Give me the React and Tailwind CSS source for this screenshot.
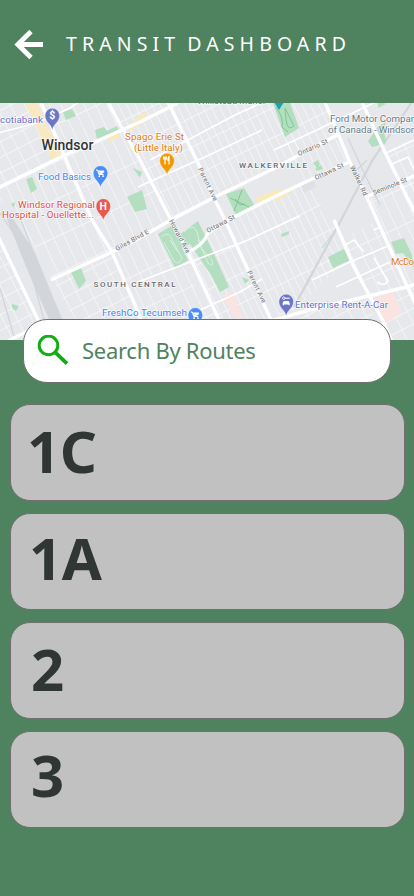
import React from "react";

const majorRoads = [
  "M40 100L64 155L92 220L112 252L135 305L142 322",
  "M-2 188L65 155L140 122L170 107L182 100",
  "M107 100L122 128L140 160L171 220L188 253L220 322",
  "M167 100L198 163L215 200L225 220L248 270L272 322",
  "M51 280L112 252L138 239L171 220L215 197L271 170L337 135",
  "M188 252Q203 246 208 233L228 220L274 197L314 178L349 162",
  "M324 100L349 160L366 195L377 220L407 286L418 310",
  "M366 197L416 175",
  "M270 321L317 308L407 287L416 284",
  "M334 220L354 267L384 323L392 342",
  "M361 100L384 150L407 197L416 214",
  "M-2 236L38 320L46 342",
  "M8 341L28 331",
];

const midRoads = [
  "M-2 133L37 123L70 108L82 100",
  "M138 187L205 157L262 130",
  "M150 160L237 114L275 97",
  "M138 282L190 262L248 240L300 216",
  "M200 310L240 292L262 279",
  "M274 150L338 120L380 100",
  "M312 280L350 262L388 246",
  "M336 287L390 262",
  "M345 245L354 240L364 252M374 230L382 226M374 258L388 281Q384 287 377 282",
  "M384 154L414 140M390 165L408 157L414 170",
];

const parks = [
  "M63 112L72 109L76 116L66 120Z",
  "M95 130L104 127L107 131L117 126L120 132L97 139Z",
  "M26 179L32 177L37 189L31 193Z",
  "M11 204L15 202L14 208Z",
  "M127 197L142 190L147 209L135 212Z",
  "M133 168L142 172L140 178Z",
  "M71 272L81 268L86 281L79 289Z",
  "M12 304L19 306L16 311L12 308Z",
  "M226 194L244 188L255 206L236 215Z",
  "M273 103L290 103L299 128L285 137Z",
  "M378 100L386 104L378 108Z",
  "M378 127L386 122L384 130L386 143L372 147L368 141Z",
  "M313 163L318 160L320 164L317 168Z",
  "M315 168L321 165L323 169L317 171Z",
  "M158 234L171 226L179 235L198 221L214 254L229 287L220 292L211 275L190 244L182 248L188 260L175 268Z",
  "M242 277L249 280L245 284Z",
  "M328 257L344 249L350 260L333 268Z",
  "M391 242L404 238L412 255L414 268L403 253L396 254Z",
  "M281 234L289 231L289 234L282 237Z",
];

const labels = [
  { x: 0, y: 123, w: 43, t: "cotiabank", c: "#6672cc" },
  { x: 38, y: 180, w: 53, t: "Food Basics", c: "#4285f4" },
  { x: 18, y: 208, w: 77, t: "Windsor Regional", c: "#e84c45" },
  { x: 2, y: 218, w: 92, t: "Hospital -  Ouellette...", c: "#e84c45" },
  { x: 125, y: 140, w: 59, t: "Spago Erie St", c: "#e37d0b" },
  { x: 134, y: 151, w: 49, t: "(Little Italy)", c: "#e37d0b" },
  { x: 330, y: 122, w: 84, t: "Ford Motor Compar", c: "#657d89" },
  { x: 328, y: 132.5, w: 86, t: "of Canada - Windsor", c: "#657d89" },
  { x: 391, y: 265, w: 23, t: "McDo", c: "#e37d0b" },
  { x: 295, y: 308, w: 93, t: "Enterprise Rent-A-Car", c: "#6672cc" },
  { x: 102, y: 316, w: 85, t: "FreshCo Tecumseh", c: "#4285f4" },
];

const streets = [
  { x: 117, y: 251, r: -29, w: 37, t: "Giles Blvd E" },
  { x: 169, y: 221, r: 62, w: 37, t: "Howard Ave" },
  { x: 208, y: 233, r: -28, w: 31, t: "Ottawa St" },
  { x: 198, y: 169, r: 64, w: 36, t: "Parent Ave" },
  { x: 247, y: 272, r: 64, w: 35, t: "Parent Ave" },
  { x: 299, y: 156, r: -24, w: 32, t: "Ontario St" },
  { x: 316, y: 180, r: -25, w: 31, t: "Ottawa St" },
  { x: 350, y: 167, r: 65, w: 32, t: "Walker Rd" },
  { x: 374, y: 195, r: -22, w: 36, t: "Seminole St" },
];

function Pin({ x, y, color, children }) {
  return (
    <g transform={`translate(${x} ${y})`}>
      <path
        d="M0 14.2C-1 8.8-7.2 6.5-7.2 0A7.2 7.2 0 0 1 7.2 0C7.2 6.5 1 8.8 0 14.2Z"
        fill={color}
        stroke="#fff"
        strokeOpacity=".5"
        strokeWidth=".5"
      />
      {children}
    </g>
  );
}

function Cart() {
  return (
    <g>
      <path d="M-4.5-3H-3L-1.5 1.5H3M-2.3-2H3.5L2.4 0H-1.6" fill="#fff" stroke="#fff" strokeWidth="1" />
      <circle cx="-1.2" cy="3.2" r=".9" fill="#fff" />
      <circle cx="2.6" cy="3.2" r=".9" fill="#fff" />
    </g>
  );
}

function CityMap() {
  return (
    <svg viewBox="0 103 414 237" className="block h-[237px] w-full font-[Roboto,sans-serif]">
      <defs>
        <pattern id="fine" width="7.5" height="27" patternUnits="userSpaceOnUse" patternTransform="rotate(-26)">
          <path d="M0 0V27M0 0H7.5" stroke="#fff" strokeOpacity=".75" strokeWidth="1.3" />
        </pattern>
        <pattern id="wide" width="13" height="14" patternUnits="userSpaceOnUse" patternTransform="rotate(-27)">
          <path d="M0 0V14M0 0H13" stroke="#fff" strokeOpacity=".75" strokeWidth="1.3" />
        </pattern>
        <pattern id="long" width="10.5" height="34" patternUnits="userSpaceOnUse" patternTransform="rotate(-25)">
          <path d="M0 0V34M0 0H10.5" stroke="#fff" strokeOpacity=".75" strokeWidth="1.3" />
        </pattern>
      </defs>

      <rect x="0" y="103" width="414" height="237" fill="#e7e8ec" />
      <path d="M0 103H40L64 155L0 187Z" fill="url(#wide)" />
      <path d="M0 187L64 155L92 220L112 252L52 280L20 220L0 200Z" fill="url(#long)" />
      <path d="M52 280L112 252L142 320H75Z" fill="url(#wide)" />
      <path d="M0 237L46 340H0Z" fill="url(#wide)" />
      <path d="M44 103H107L122 130L66 155Z" fill="url(#long)" />
      <path d="M66 155L124 130L171 220L112 252Z" fill="url(#long)" />
      <path d="M107 103H168L215 197L171 220Z" fill="url(#fine)" />
      <path d="M168 103H274L300 150L215 197Z" fill="url(#fine)" />
      <path d="M112 252L158 232L220 320H142Z" fill="url(#long)" />
      <path d="M190 253L228 220L272 320H220Z" fill="url(#fine)" />
      <path d="M228 220L310 180L352 255L290 315H272Z" fill="url(#fine)" />
      <path d="M274 103H324L349 160L300 185Z" fill="url(#fine)" />
      <path d="M342 237L377 220L407 286L365 297Z" fill="url(#long)" />
      <path d="M366 197L414 175V290L407 286Z" fill="url(#long)" />
      <path d="M300 315L365 297L388 340H300ZM370 297L414 285V340H392Z" fill="url(#wide)" />
      <path d="M384 150L414 140V210Z" fill="url(#long)" />
      <path d="M316 210L345 178L365 200L376 222L345 236L333 215Z" fill="#e7e8ec" />

      <g fill="#fce9b8">
        <path d="M26 105L36 100L46 124L57 143L64 155L53 163L44 143L34 123Z" fillOpacity=".8" />
        <path d="M107 134L118 129L120 136L109 142ZM126 126L138 119L141 124L129 131ZM138 117L145 112L145 119L139 124Z" />
        <path d="M256 198L279 189L282 196L259 206ZM274 195L291 186L292 191L276 202Z" />
      </g>
      <path d="M223 296Q230 290 235 297L243 318H234ZM376 298L393 292L402 313L385 323ZM373 326L385 323L391 340H380Z" fill="#fbe3e1" />
      <path d="M300 183L313 179L316 187L304 193Z" fill="#dfe0e4" />

      <g fill="none" stroke="#d2d5d9">
        <path d="M7 218H12L34 252L62 320H50L30 275Z" fill="#d2d5d9" strokeWidth="1" />
        <path d="M0 213L25 250L44 320M21 220L44 280L60 320M0 288L15 340" strokeWidth="1.3" />
        <path d="M416 96L372 161L340 222L294 307" strokeWidth="2.2" />
        <path d="M348 138L365 175L380 205M355 172L367 160M322 248L340 224" strokeWidth="1.2" />
      </g>

      <g fill="#b3debf">
        {parks.map((d) => (
          <path key={d} d={d} />
        ))}
      </g>
      <g fill="none" stroke="#dcf0e1" strokeWidth=".9">
        <path d="M161 237Q170 230 172 240L182 258Q179 266 174 261L164 242M170 240L178 252M184 232Q193 222 197 232L201 248L212 260Q214 269 208 263L198 240" />
      </g>
      <g fill="none" stroke="#74bf8b" strokeWidth=".8">
        <path d="M230 198L249 207M234 211L242 190M235 199L240 205L245 204M276 107Q284 118 282 127L288 132M285 108L294 126Q287 132 286 119Z" />
      </g>

      <g fill="none" stroke="#fff" strokeLinejoin="round">
        <g strokeWidth="1.6">
          {midRoads.map((d) => (
            <path key={d} d={d} />
          ))}
        </g>
        <g strokeWidth="3.4">
          {majorRoads.map((d) => (
            <path key={d} d={d} />
          ))}
        </g>
      </g>

      <g fontSize="6.6" fill="#6a6d71" stroke="#f3f3f5" strokeWidth="1.2" paintOrder="stroke">
        {streets.map((s) => (
          <text key={s.t + s.x} transform={`translate(${s.x} ${s.y}) rotate(${s.r})`} textLength={s.w}>
            {s.t}
          </text>
        ))}
      </g>

      <Pin x={52.3} y={115.5} color="#6b76c6">
        <text y="3.8" textAnchor="middle" fontSize="10.5" fontWeight="700" fill="#fff">$</text>
      </Pin>
      <Pin x={100.5} y={173} color="#4b8df8">
        <Cart />
      </Pin>
      <Pin x={103.3} y={206} color="#e9594f">
        <text y="3.7" textAnchor="middle" fontSize="10.5" fontWeight="700" fill="#fff">H</text>
      </Pin>
      <Pin x={167} y={160.5} color="#f29900">
        <path d="M-2 4V-4M-3.3-4V-1.5H-.7V-4M2 4V-4Q.7-3 .9 0H2" fill="none" stroke="#fff" strokeWidth="1.2" />
      </Pin>
      <Pin x={286.2} y={301.5} color="#6b76c6">
        <path d="M-3.5 3.8V1.2L-2.4-.6H2.4L3.5 1.2V3.8H2.2V2.9H-2.2V3.8Z" fill="#fff" />
        <path d="M-1.5-3.3H3.5" stroke="#fff" strokeWidth="1.1" />
        <circle cx="-2.4" cy="-3.3" r="1.2" fill="none" stroke="#fff" strokeWidth=".9" />
      </Pin>
      <Pin x={195.3} y={315} color="#4b8df8">
        <Cart />
      </Pin>
      <path d="M274 102H284L279 110Z" fill="#12a5b5" />

      <g stroke="#fff" strokeOpacity=".8" strokeWidth="1.4" paintOrder="stroke" strokeLinejoin="round">
        <g fontSize="9.8">
          {labels.map((l) => (
            <text key={l.t} x={l.x} y={l.y} fill={l.c} textLength={l.w}>
              {l.t}
            </text>
          ))}
        </g>
        <text x="197" y="104" fontSize="9.6" fill="#45848f" textLength="69">Willistead Manor</text>
        <text x="41.5" y="150" fontSize="14" fontWeight="500" fill="#303236" textLength="52">Windsor</text>
        <g fontSize="8" fontWeight="500" fill="#66696d">
          <text x="239" y="168" textLength="68">WALKERVILLE</text>
          <text x="93.5" y="287" textLength="82">SOUTH CENTRAL</text>
        </g>
      </g>
    </svg>
  );
}

const routes = [
  { name: "1C", pad: "pl-[16px] pt-[3px]" },
  { name: "1A", pad: "pl-[18px] pt-[1px]" },
  { name: "2", pad: "pl-[20px] pt-[3px]" },
  { name: "3", pad: "pl-[20px] pt-[0px]" },
];

export default function App() {
  return (
    <div className="h-[896px] w-[414px] overflow-hidden bg-[#4f825f] font-['Noto_Sans','Open_Sans',sans-serif]">
      <header className="flex h-[103px] items-start pl-[14px] pt-[29px] text-white">
        <svg className="h-[31px] w-[30px] shrink-0" viewBox="0 0 30 31" fill="none" stroke="currentColor" strokeWidth="4.8">
          <path d="M17 2.5L3.8 15.5L17 28.5M4 15.5H29" />
        </svg>
        <h1 className="ml-[22px] whitespace-nowrap text-[19.5px] font-normal leading-[30px] tracking-[5.1px] [word-spacing:-3px]">
          TRANSIT DASHBOARD
        </h1>
      </header>

      <CityMap />

      <label className="relative z-10 mx-[23px] -mt-[21px] flex h-[64px] items-center rounded-[24px] border border-[#707070] bg-white pl-[13px]">
        <svg className="h-[32px] w-[32px] shrink-0" viewBox="0 0 32 32" fill="none" stroke="#12ad12" strokeWidth="3">
          <circle cx="11.5" cy="10.4" r="9.3" />
          <path d="M18 17.2L30 28.7" strokeWidth="3.8" />
        </svg>
        <span className="mb-[3px] ml-[13px] whitespace-nowrap text-[22px] leading-[30px] tracking-[-0.28px] text-[#4f825f]">
          Search By Routes
        </span>
      </label>

      <main className="ml-[10px] mt-[21px] flex w-[395px] flex-col gap-[12px]">
        {routes.map((r) => (
          <button
            key={r.name}
            className={`flex h-[97px] items-start rounded-[20px] border border-[#707070] bg-[#c1c1c1] text-left ${r.pad}`}
          >
            <span className="text-[58px] font-bold leading-[85px] tracking-[-0.5px] text-[#2f3634]">{r.name}</span>
          </button>
        ))}
      </main>
    </div>
  );
}
